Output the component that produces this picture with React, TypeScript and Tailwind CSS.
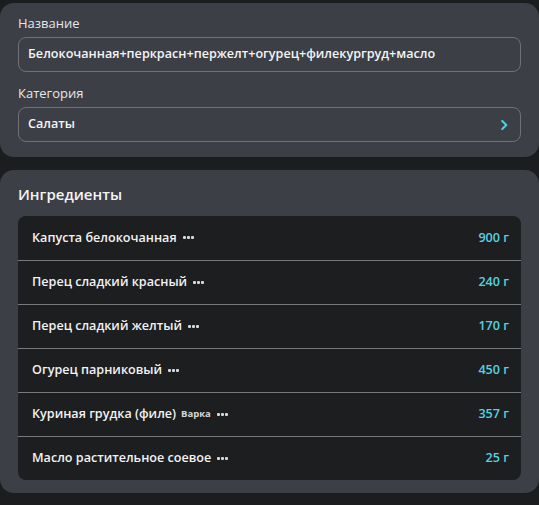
import React from "react";

const items: { name: string; note?: string; value: string }[] = [
  { name: "Капуста белокочанная", value: "900 г" },
  { name: "Перец сладкий красный", value: "240 г" },
  { name: "Перец сладкий желтый", value: "170 г" },
  { name: "Огурец парниковый", value: "450 г" },
  { name: "Куриная грудка (филе)", note: "Варка", value: "357 г" },
  { name: "Масло растительное соевое", value: "25 г" },
];

function Dots() {
  return (
    <span className="ml-[6px] inline-flex items-center gap-[1px] self-center">
      <span className="block h-[3px] w-[3px] rounded-[1px] bg-[#d8d8d8]" />
      <span className="block h-[3px] w-[3px] rounded-[1px] bg-[#d8d8d8]" />
      <span className="block h-[3px] w-[3px] rounded-[1px] bg-[#d8d8d8]" />
    </span>
  );
}

export default function App() {
  return (
    <div
      className="min-h-[505px] w-[539px] bg-[#1c1d1f] pt-[3px]"
      style={{ fontFamily: '"Open Sans", "Noto Sans", sans-serif' }}
    >
      <div className="rounded-[14px] bg-[#3c3f45] px-[18px] pt-[11px] pb-[15px]">
        <div className="text-[13px] leading-[18px] text-[#e6e7ea]">Название</div>
        <div className="mt-[5px] flex h-[35px] items-center rounded-[8px] border border-[#6e7178] px-[9px] text-[12.6px] font-semibold text-[#f4f4f5]">
          Белокочанная+перкрасн+пержелт+огурец+филекургруд+масло
        </div>
        <div className="mt-[12px] text-[13px] leading-[18px] text-[#e6e7ea]">Категория</div>
        <div className="mt-[5px] flex h-[35px] items-center justify-between rounded-[8px] border border-[#6e7178] pl-[9px] pr-[9px] text-[12.6px] font-semibold text-[#f4f4f5]">
          <span>Салаты</span>
          <svg width="14" height="14" viewBox="0 0 24 24" fill="none" stroke="#4fd0df" strokeWidth="3.5" strokeLinecap="round" strokeLinejoin="round">
            <path d="M9 5l7 7-7 7" />
          </svg>
        </div>
      </div>

      <div className="mt-[13px] rounded-[14px] bg-[#3c3f45] px-[18px] pt-[13px] pb-[13px]">
        <div className="text-[15px] font-semibold leading-[22px] text-[#f4f4f5]">Ингредиенты</div>
        <div className="mt-[11px] overflow-hidden rounded-[8px] bg-[#1d1e20]">
          {items.map((it, i) => (
            <div
              key={i}
              className={
                "flex h-[44px] items-center justify-between pl-[14px] pr-[12px] " +
                (i > 0 ? "border-t border-[#77797d]" : "")
              }
            >
              <div className="flex items-center text-[12.6px] font-semibold text-[#f2f2f3]">
                <span>{it.name}</span>
                {it.note && <span className="ml-[5px] text-[9.5px] font-bold text-[#d6d7d9]">{it.note}</span>}
                <Dots />
              </div>
              <div className="text-[12.6px] font-semibold text-[#56d2e2]">{it.value}</div>
            </div>
          ))}
        </div>
      </div>
    </div>
  );
}
